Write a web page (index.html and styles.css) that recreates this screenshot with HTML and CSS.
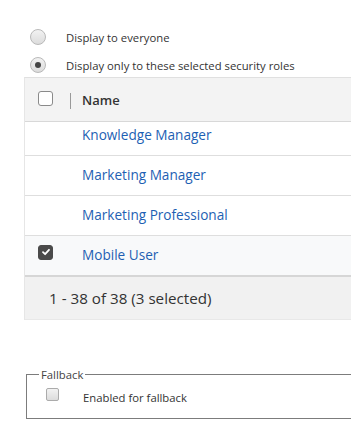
FILE: index.html
```html
<!DOCTYPE html>
<html lang="en">
<head>
    <meta charset="UTF-8">
    <meta name="viewport" content="width=device-width, initial-scale=1.0">
    <title>Security Roles</title>
    <link rel="stylesheet" href="styles.css">
</head>
<body>
    <!-- Visibility options -->
    <div class="options">
        <label class="option">
            <span class="radio"></span>
            <span>Display to everyone</span>
        </label>
        <label class="option">
            <span class="radio checked"></span>
            <span>Display only to these selected security roles</span>
        </label>
    </div>

    <!-- Roles grid -->
    <div class="grid">
        <div class="grid-head">
            <span class="check-cell"><span class="box"></span></span>
            <span class="sep"></span>
            <span class="head-title">Name</span>
        </div>
        <div class="grid-row first">
            <span class="check-cell"></span>
            <a href="#">Knowledge Manager</a>
        </div>
        <div class="grid-row">
            <span class="check-cell"></span>
            <a href="#">Marketing Manager</a>
        </div>
        <div class="grid-row">
            <span class="check-cell"></span>
            <a href="#">Marketing Professional</a>
        </div>
        <div class="grid-row selected">
            <span class="check-cell">
                <span class="box on">
                    <svg width="10" height="10" viewBox="0 0 10 10"><path d="M2 5.2 L4.1 7.2 L8 2.8" fill="none" stroke="#fff" stroke-width="1.8" stroke-linecap="round" stroke-linejoin="round"/></svg>
                </span>
            </span>
            <a href="#">Mobile User</a>
        </div>
        <div class="grid-foot">1 - 38 of 38 (3 selected)</div>
    </div>

    <!-- Fallback -->
    <fieldset class="fallback">
        <legend>Fallback</legend>
        <label class="option small">
            <span class="tick"></span>
            <span>Enabled for fallback</span>
        </label>
    </fieldset>
</body>
</html>
```

FILE: styles.css
```css
body {
    margin: 0;
    padding: 0;
    width: 351px;
    height: 432px;
    overflow: hidden;
    background-color: #fff;
    font-family: "Open Sans", "Noto Sans", sans-serif;
    color: #333;
}
.options {
    padding: 24px 0 0 30px;
}
.option {
    display: flex;
    align-items: center;
    height: 26px;
    font-size: 11.3px;
    color: #333;
}
.option + .option {
    margin-top: 2px;
}
.radio {
    width: 14px;
    height: 14px;
    border-radius: 50%;
    border: 1px solid #b9b9b9;
    background: linear-gradient(#f2f2f2, #dcdcdc);
    margin-right: 20px;
    display: flex;
    align-items: center;
    justify-content: center;
}
.radio.checked::after {
    content: "";
    width: 6px;
    height: 6px;
    border-radius: 50%;
    background-color: #444;
}
.grid {
    margin: -1px 0 0 24px;
    width: 340px;
    border-top: 1px solid #e0e0e0;
    border-left: 1px solid #e6e6e6;
}
.grid-head {
    display: flex;
    align-items: center;
    height: 43px;
    background-color: #f3f3f3;
    border-bottom: 1px solid #d8d8d8;
}
.check-cell {
    width: 45px;
    display: flex;
    align-items: center;
    padding-left: 13px;
    box-sizing: border-box;
}
.box {
    width: 15px;
    height: 15px;
    box-sizing: border-box;
    border: 1.5px solid #8a8a8a;
    border-radius: 3px;
    background-color: #fff;
    margin-bottom: 3px;
}
.box.on {
    background-color: #4a4a4a;
    border-color: #4a4a4a;
    display: flex;
    align-items: center;
    justify-content: center;
    margin-bottom: 5px;
}
.sep {
    width: 1px;
    height: 16px;
    background-color: #999;
    margin-top: 2px;
}
.head-title {
    margin-left: 11px;
    font-size: 13px;
    font-weight: 600;
    color: #333;
}
.grid-row {
    display: flex;
    align-items: center;
    height: 37px;
    padding-bottom: 2px;
    border-bottom: 1px solid #dedede;
    background-color: #fff;
}
.grid-row.first {
    height: 25px;
    padding-bottom: 8px;
}
.grid-row a {
    margin-left: 12px;
    font-size: 13.6px;
    color: #1e5fb3;
    text-decoration: none;
}
.grid-row.selected {
    background-color: #f8f9fa;
    border-bottom: 2px solid #d6d6d6;
}
.grid-foot {
    display: flex;
    align-items: center;
    height: 42px;
    padding-left: 24px;
    background-color: #f1f1f1;
    border-bottom: 1px solid #e8e8e8;
    font-size: 15.2px;
    color: #333;
}
.fallback {
    margin: 47px 0 0 26px;
    padding: 0 0 0 12px;
    width: 340px;
    height: 52px;
    box-sizing: border-box;
    border: 1px solid #7c7c7c;
    border-right: none;
}
.fallback legend {
    padding: 0 2px;
    font-size: 11.3px;
    color: #444;
}
.option.small {
    height: 30px;
    padding-left: 7px;
}
.tick {
    width: 11px;
    height: 11px;
    border: 1px solid #ababab;
    border-radius: 2px;
    background: linear-gradient(#f2f2f2, #dcdcdc);
    margin-right: 24px;
    margin-bottom: 5px;
}
```
